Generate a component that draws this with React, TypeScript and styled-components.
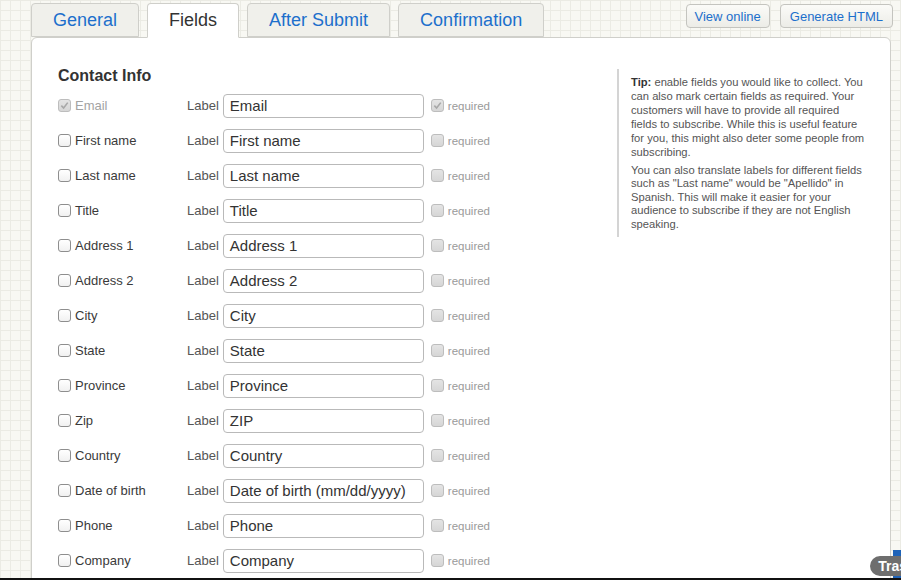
import React from "react";
import styled, { createGlobalStyle, css } from "styled-components";

const GlobalStyle = createGlobalStyle`
  html, body {
    margin: 0;
    padding: 0;
  }
  body {
    font-family: "Liberation Sans", Arial, sans-serif;
    background-color: #f8f8f3;
    background-image:
      linear-gradient(#ebebe4 1px, transparent 1px),
      linear-gradient(90deg, #ebebe4 1px, transparent 1px);
    background-size: 10px 10px;
    overflow: hidden;
  }
`;

const Page = styled.div`
  width: 901px;
  height: 580px;
  box-sizing: border-box;
  padding: 3px 10px 0 31px;
  position: relative;
  overflow: hidden;
  border-bottom: 2px solid #111;
`;

const TopBar = styled.div`
  display: flex;
  justify-content: space-between;
  align-items: flex-start;
`;

const Tabs = styled.div`
  display: flex;
  gap: 8px;
  margin-bottom: -1px;
  position: relative;
  z-index: 1;
`;

const Tab = styled.div<{ $active?: boolean }>`
  height: 34px;
  box-sizing: border-box;
  padding: 0 21px;
  display: flex;
  align-items: center;
  font-size: 18px;
  border: 1px solid #cfcfca;
  border-radius: 4px 4px 0 0;
  background: #f0f0eb;
  color: #1c6fcc;
  ${(p) =>
    p.$active &&
    css`
      background: #fff;
      color: #333;
      border-bottom-color: #fff;
      height: 35px;
    `}
`;

const Actions = styled.div`
  display: flex;
  gap: 10px;
  padding-top: 1px;
  margin-right: -2px;
`;

const ActionButton = styled.button<{ $pad: number }>`
  height: 24px;
  padding: 0 ${(p) => p.$pad}px;
  font-family: "Liberation Sans", Arial, sans-serif;
  font-size: 13px;
  color: #1c6fcc;
  background: linear-gradient(#fbfbf8, #ececE7);
  border: 1px solid #c4c4bf;
  border-radius: 4px;
`;

const Panel = styled.div`
  background: #fff;
  border: 1px solid #cfcfca;
  border-radius: 6px 6px 0 0;
  height: 560px;
  box-sizing: border-box;
  padding: 28px 0 0 26px;
  display: flex;
`;

const FormColumn = styled.div`
  width: 559px;
`;

const Heading = styled.h3`
  margin: 0 0 3px;
  font-size: 16px;
  font-weight: 700;
  color: #333;
  line-height: 19px;
`;

const Row = styled.div`
  height: 35px;
  display: flex;
  align-items: center;
`;

const FieldName = styled.div<{ $disabled?: boolean }>`
  width: 129px;
  display: flex;
  align-items: center;
  gap: 4px;
  font-size: 13px;
  color: ${(p) => (p.$disabled ? "#a3a3a3" : "#3a3a3a")};
`;

const Box = styled.span<{ $muted?: boolean }>`
  width: 13px;
  height: 13px;
  box-sizing: border-box;
  border-radius: 3px;
  border: 1px solid ${(p) => (p.$muted ? "#bdbdbd" : "#8e8e8e")};
  background: ${(p) => (p.$muted ? "linear-gradient(#e4e4e4, #d6d6d6)" : "linear-gradient(#fff, #f1f1f1)")};
  display: inline-flex;
  align-items: center;
  justify-content: center;
  flex-shrink: 0;
`;

const LabelText = styled.span`
  font-size: 13px;
  color: #555;
  margin-right: 4px;
`;

const TextInput = styled.div`
  width: 201px;
  height: 24px;
  box-sizing: border-box;
  border: 1px solid #b9b9b9;
  border-radius: 4px;
  padding: 0 6px;
  display: flex;
  align-items: center;
  font-size: 15px;
  color: #333;
`;

const Required = styled.div`
  margin-left: 7px;
  display: flex;
  align-items: center;
  gap: 4px;
  font-size: 11.5px;
  color: #9a9a9a;
`;

const Tip = styled.div`
  margin-top: 3px;
  width: 250px;
  height: 168px;
  box-sizing: border-box;
  border-left: 2px solid #d4d4d4;
  padding: 6px 0 0 12px;
  font-size: 11.2px;
  line-height: 13.5px;
  color: #555;
  white-space: nowrap;
  p {
    margin: 0 0 4px;
  }
  p:first-child {
    line-height: 14.1px;
  }
  b {
    color: #333;
  }
`;

const DockBadge = styled.div`
  position: absolute;
  right: -14px;
  bottom: 2px;
  height: 20px;
  padding: 0 8px;
  border-radius: 10px;
  background: #6e6e6e;
  color: #fff;
  font-weight: 700;
  font-size: 14px;
  line-height: 20px;
  z-index: 3;
`;

const DockStrip = styled.div`
  position: absolute;
  right: 0;
  bottom: 0;
  width: 8px;
  height: 28px;
  background: #1f63b8;
  z-index: 2;
`;

const Check = ({ color }: { color: string }) => (
  <svg width="9" height="9" viewBox="0 0 10 10">
    <path d="M1.5 5.2 L4 7.8 L8.6 1.8" fill="none" stroke={color} strokeWidth="1.8" />
  </svg>
);

const fields = [
  ["Email", "Email"],
  ["First name", "First name"],
  ["Last name", "Last name"],
  ["Title", "Title"],
  ["Address 1", "Address 1"],
  ["Address 2", "Address 2"],
  ["City", "City"],
  ["State", "State"],
  ["Province", "Province"],
  ["Zip", "ZIP"],
  ["Country", "Country"],
  ["Date of birth", "Date of birth (mm/dd/yyyy)"],
  ["Phone", "Phone"],
  ["Company", "Company"],
];

export default function App() {
  return (
    <>
      <GlobalStyle />
      <Page>
        <TopBar>
          <Tabs>
            <Tab>General</Tab>
            <Tab $active>Fields</Tab>
            <Tab>After Submit</Tab>
            <Tab>Confirmation</Tab>
          </Tabs>
          <Actions>
            <ActionButton $pad={8}>View online</ActionButton>
            <ActionButton $pad={9}>Generate HTML</ActionButton>
          </Actions>
        </TopBar>
        <Panel>
          <FormColumn>
            <Heading>Contact Info</Heading>
            {fields.map(([name, label], i) => {
              const isEmail = i === 0;
              return (
                <Row key={name}>
                  <FieldName $disabled={isEmail}>
                    <Box $muted={isEmail}>{isEmail && <Check color="#a8a8a8" />}</Box>
                    {name}
                  </FieldName>
                  <LabelText>Label</LabelText>
                  <TextInput>{label}</TextInput>
                  <Required>
                    <Box $muted>{isEmail && <Check color="#a8a8a8" />}</Box>
                    required
                  </Required>
                </Row>
              );
            })}
          </FormColumn>
          <Tip>
            <p>
              <b>Tip:</b> enable fields you would like to collect. You
              <br />
              can also mark certain fields as required. Your
              <br />
              customers will have to provide all required
              <br />
              fields to subscribe. While this is useful feature
              <br />
              for you, this might also deter some people from
              <br />
              subscribing.
            </p>
            <p>
              You can also translate labels for different fields
              <br />
              such as "Last name" would be "Apellido" in
              <br />
              Spanish. This will make it easier for your
              <br />
              audience to subscribe if they are not English
              <br />
              speaking.
            </p>
          </Tip>
        </Panel>
        <DockStrip />
        <DockBadge>Tras</DockBadge>
      </Page>
    </>
  );
}
